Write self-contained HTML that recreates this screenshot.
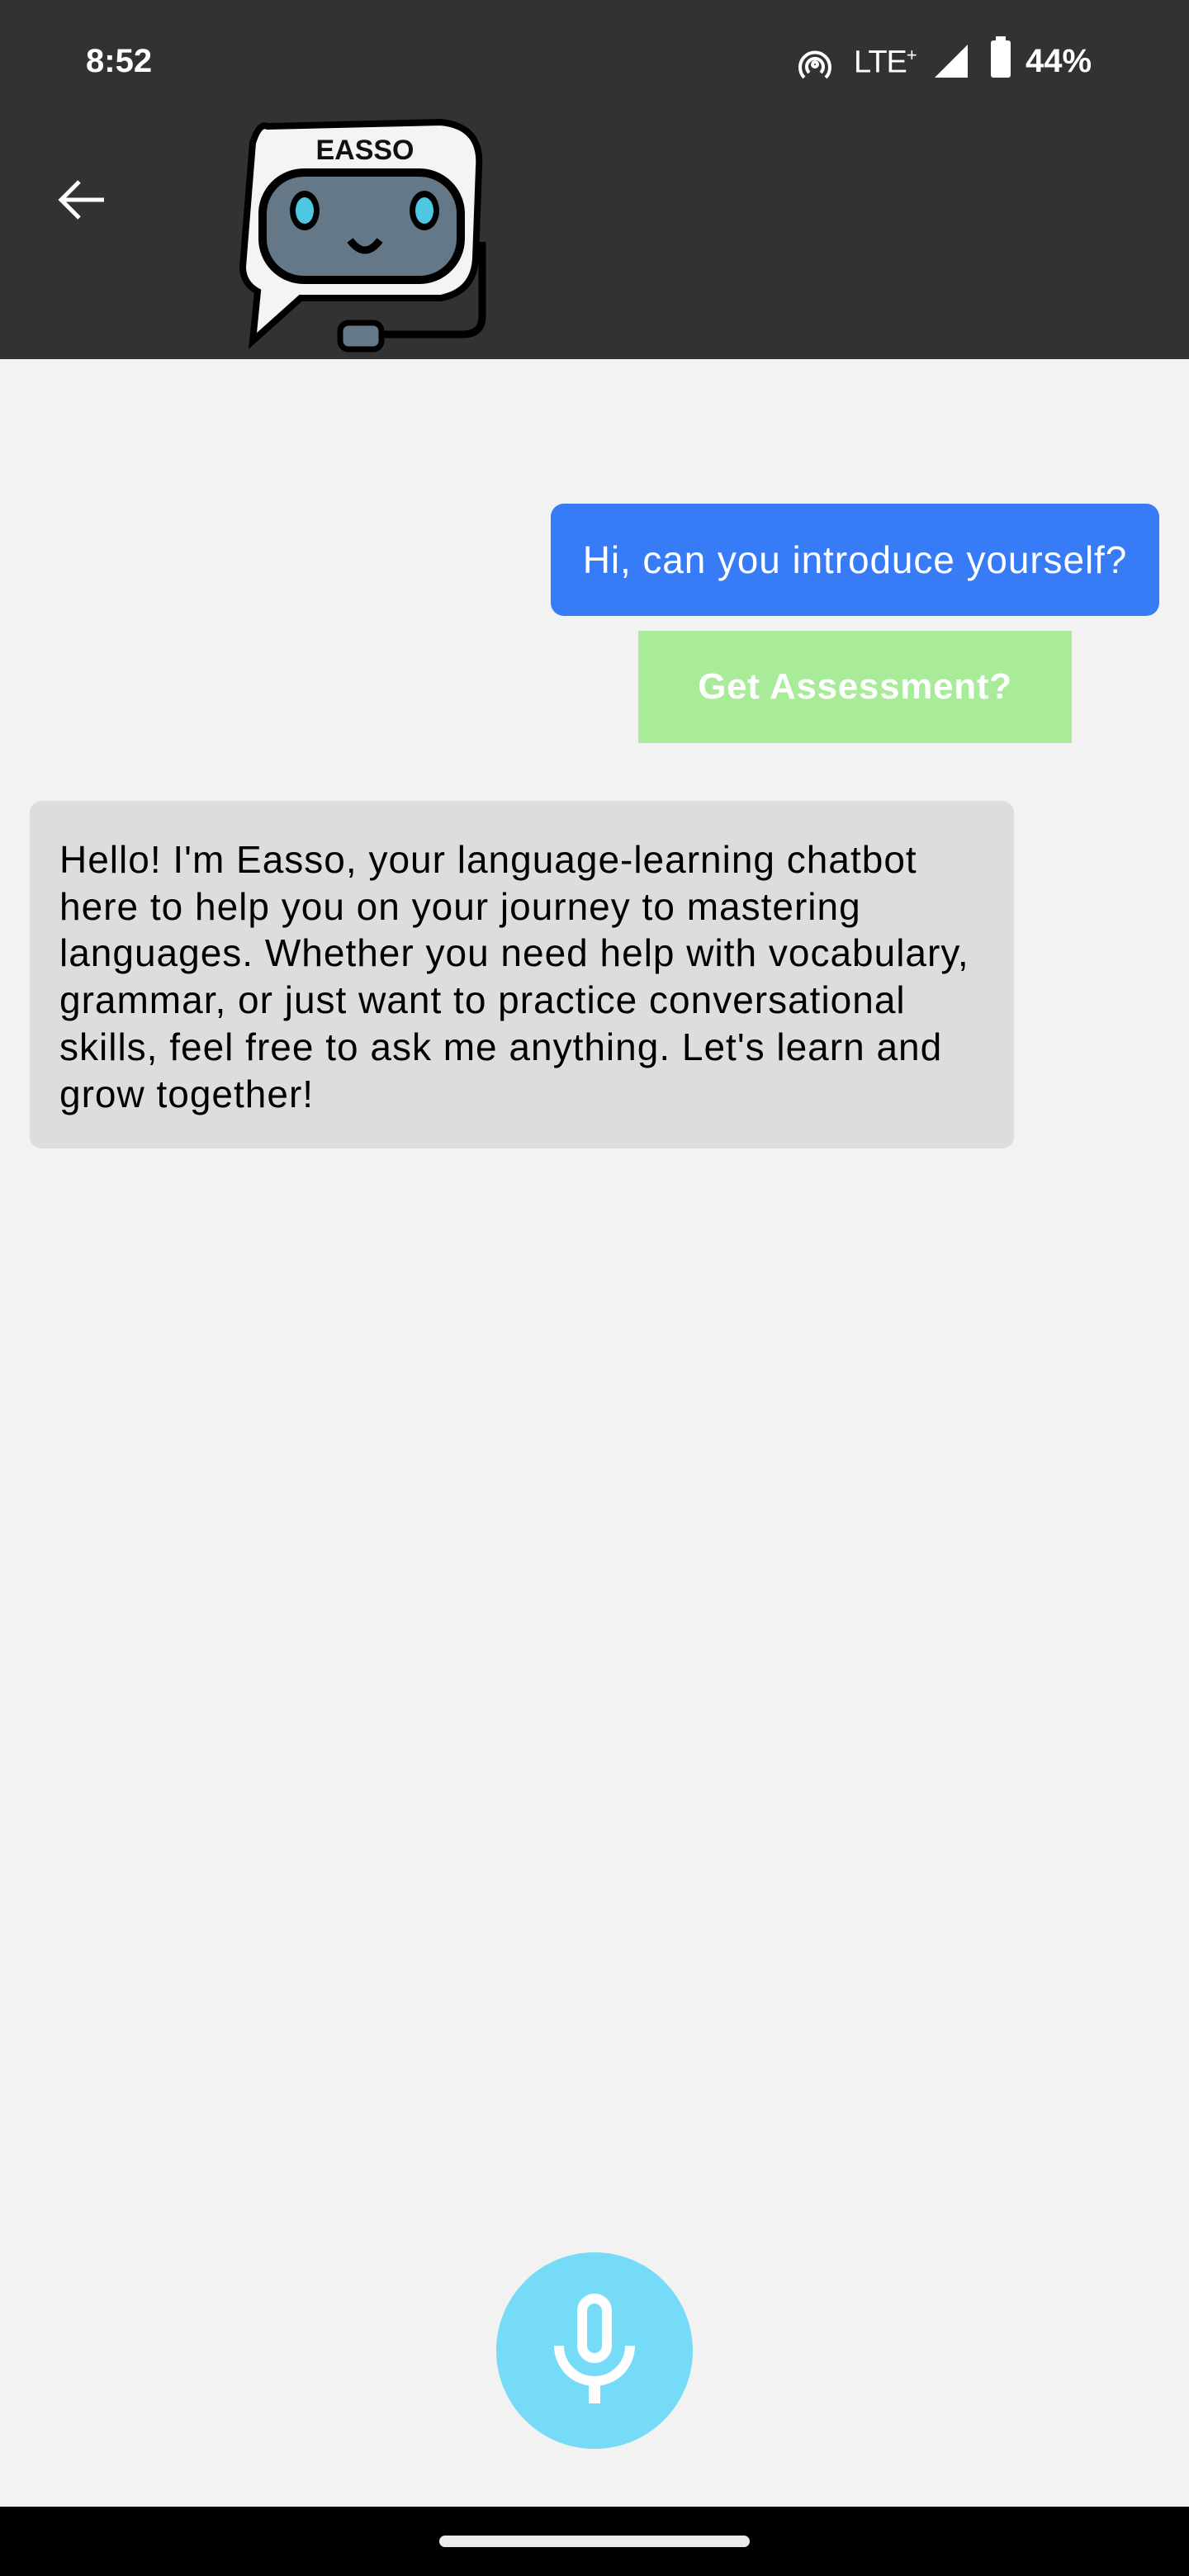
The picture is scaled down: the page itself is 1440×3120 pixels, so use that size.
<!DOCTYPE html>
<html><head><meta charset="utf-8"><style>
*{margin:0;padding:0;box-sizing:border-box}
body{width:1440px;height:3120px;background:#f2f2f2;font-family:"Liberation Sans",sans-serif;position:relative;overflow:hidden}
.hdr{position:absolute;left:0;top:0;width:1440px;height:435px;background:#323232}
.abs{position:absolute}
.st{color:#fff;font-size:40px;top:52px}
.blue{left:667px;top:610px;width:737px;height:136px;background:#387bf6;border-radius:16px;color:#fff;font-size:46px;display:flex;align-items:center;justify-content:center;letter-spacing:0.9px;white-space:nowrap}
.green{left:773px;top:764px;width:525px;height:136px;background:#a8ec99;color:#fff;font-size:44px;font-weight:bold;display:flex;align-items:center;justify-content:center;letter-spacing:0.7px;white-space:nowrap}
.grey{left:36px;top:970px;width:1192px;height:421px;background:#dddddd;border-radius:14px}
.gt{left:72px;top:1013px;font-size:46px;line-height:56.7px;color:#000;white-space:nowrap;letter-spacing:1px}
</style></head><body>
<div class="hdr"></div>
<div class="abs st" style="left:104px;font-weight:bold">8:52</div>
<div class="abs st" style="left:1034px;font-size:38px;top:54px;letter-spacing:-1px">LTE<sup style="font-size:22px">+</sup></div>
<svg class="abs" style="left:964px;top:54px" width="46" height="44" viewBox="0 0 46 44"><g fill="none" stroke="#fff" stroke-width="4"><path d="M10 40 A18 18 0 1 1 36 40"/><path d="M16 34 A10 10 0 1 1 30 34"/><circle cx="23" cy="24" r="3"/></g></svg>
<svg class="abs" style="left:1130px;top:50px" width="46" height="46"><path d="M2 44 L42 4 L42 44Z" fill="#fff"/></svg>
<svg class="abs" style="left:1198px;top:44px" width="28" height="52"><rect x="8" y="0" width="12" height="6" fill="#fff"/><rect x="2" y="5" width="24" height="45" rx="3" fill="#fff"/></svg>
<div class="abs st" style="left:1242px;font-weight:bold">44%</div>
<svg class="abs" style="left:66px;top:214px" width="64" height="56" viewBox="0 0 64 56"><path d="M60 28H8M30 6L8 28L30 50" stroke="#fff" stroke-width="5" fill="none"/></svg>
<svg class="abs" style="left:284px;top:143px" width="316" height="284" viewBox="0 0 316 284">
<path d="M40 10 Q30 5 22 30 L10 180 Q10 200 28 210 L22 270 L80 218 L250 218 Q290 210 292 170 L296 60 Q300 10 250 5 Z" fill="#f4f4f4" stroke="#000" stroke-width="8"/>
<text x="158" y="50" font-family="Liberation Sans" font-weight="bold" font-size="34" text-anchor="middle" fill="#111">EASSO</text>
<rect x="34" y="66" width="240" height="130" rx="50" fill="#657887" stroke="#000" stroke-width="10"/>
<ellipse cx="85" cy="112" rx="18" ry="24" fill="#000"/><ellipse cx="85" cy="112" rx="11" ry="16" fill="#4ec7e3"/>
<ellipse cx="230" cy="112" rx="18" ry="24" fill="#000"/><ellipse cx="230" cy="112" rx="11" ry="16" fill="#4ec7e3"/>
<path d="M140 148 Q158 172 176 148" stroke="#000" stroke-width="9" fill="none"/>
<path d="M300 150 L300 240 Q300 262 276 262 L150 262" stroke="#000" stroke-width="9" fill="none"/>
<rect x="128" y="248" width="50" height="32" rx="10" fill="#657887" stroke="#000" stroke-width="7"/>
</svg>
<div class="abs" style="left:601px;top:2728px;width:238px;height:238px;border-radius:50%;background:#76dbf7"></div>
<svg class="abs" style="left:600px;top:2728px" width="240" height="240" viewBox="600 2728 240 240">
<rect x="705" y="2784" width="30" height="72" rx="15" fill="none" stroke="#fff" stroke-width="12"/>
<path d="M677 2841 A43 43 0 0 0 763 2841" fill="none" stroke="#fff" stroke-width="12"/>
<rect x="713" y="2880" width="14" height="31" fill="#fff"/>
</svg>
<div class="abs blue">Hi, can you introduce yourself?</div>
<div class="abs green">Get Assessment?</div>
<div class="abs grey"></div>
<div class="abs gt">Hello! I'm Easso, your language-learning chatbot<br>here to help you on your journey to mastering<br>languages. Whether you need help with vocabulary,<br>grammar, or just want to practice conversational<br>skills, feel free to ask me anything. Let's learn and<br>grow together!</div>
<div class="abs" style="left:0;top:3036px;width:1440px;height:84px;background:#000"></div>
<div class="abs" style="left:532px;top:3071px;width:376px;height:14px;border-radius:7px;background:#ebebeb"></div>
</body></html>
